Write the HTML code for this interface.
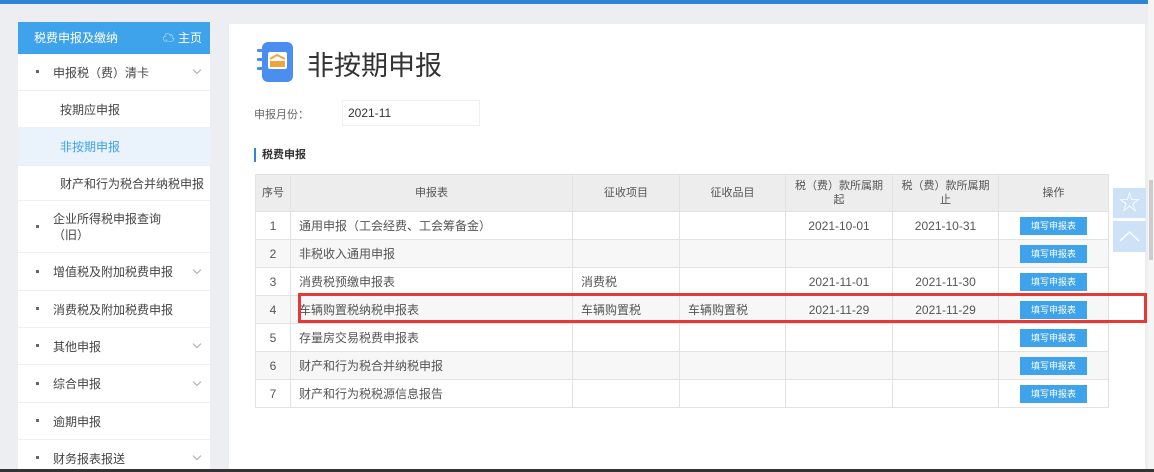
<!DOCTYPE html>
<html><head><meta charset="utf-8"><style>
*{margin:0;padding:0;box-sizing:border-box}
html,body{width:1154px;height:472px;overflow:hidden}
body{background:#eceef2;font-family:"Liberation Sans","Noto Sans CJK SC",sans-serif;position:relative;color:#555}
.topbar{position:absolute;left:0;top:0;width:1154px;height:4px;background:#2f86d6}
.side{position:absolute;left:18px;top:22px;width:192px;height:450px;background:#fff}
.sh{height:32px;background:#3ea3ea;color:#fff;font-size:12px;line-height:32px;padding-left:16px;position:relative}
.sh span{position:absolute;right:8px}
.it{border-bottom:1px solid #eee;font-size:12px;color:#444;position:relative;padding-left:35px;display:flex;align-items:center}
.it:before{content:"";position:absolute;left:18px;top:50%;width:3px;height:3px;background:#666;margin-top:-2px}
.it.sub{padding-left:42px}.it.sub:before{display:none}
.it.sel{background:#eaf2fb;color:#3ea3ea}
.chev{position:absolute;right:10px;top:50%;width:6px;height:6px;border-right:1px solid #aaa;border-bottom:1px solid #aaa;transform:rotate(45deg);margin-top:-5px}
.main{position:absolute;left:229px;top:24px;width:916px;height:448px;background:#fff}
.title{position:absolute;left:307px;top:44px;font-size:27px;color:#333}
.icon{position:absolute;left:257px;top:41px;width:37px;height:42px}
.lab{position:absolute;left:254px;top:106px;font-size:11px;color:#666}
.inp{position:absolute;left:342px;top:100px;width:138px;height:26px;border:1px solid #f0f0f0;font-size:12px;line-height:24px;padding-left:5px;color:#333}
.sec{position:absolute;left:254px;top:148px;font-size:11px;color:#333;border-left:2px solid #2f86d6;padding-left:6px;height:14px;line-height:14px;font-weight:bold}
table{position:absolute;left:255px;top:174px;border-collapse:collapse;font-size:12px;color:#555}
td,th{border:1px solid #e2e2e2;height:28px;text-align:center;font-weight:normal}
th{background:#ededed;height:37px;font-size:11px;line-height:14px}
td.l{text-align:left;padding-left:8px}
tr:nth-child(odd) td{background:#f7f7f7}
.b{display:inline-block;width:67px;height:18px;background:#3ea3ea;color:#fff;font-size:9px;line-height:18px}
.red{position:absolute;left:298px;top:293px;width:849px;height:30px;border:3px solid #e53935}
.fl{position:absolute;left:1113px;width:33px;height:30px;background:#cde2f7;color:#fff;text-align:center}
.scroll{position:absolute;left:1148px;top:0;width:6px;height:472px;background:#f5f5f5}
.bottom{position:absolute;left:0;top:469px;width:1154px;height:3px;background:#333}
</style></head><body>
<div class="topbar"></div>
<div class="scroll"><div style="position:absolute;top:180px;left:1px;width:4px;height:80px;background:#ccc"></div></div>
<div class="side">
<div class="sh">税费申报及缴纳<span>☁ 主页</span></div>
<div class="it" style="height:37px">申报税（费）清卡<i class="chev"></i></div>
<div class="it sub" style="height:37px">按期应申报</div>
<div class="it sub sel" style="height:38px">非按期申报</div>
<div class="it sub" style="height:35px">财产和行为税合并纳税申报</div>
<div class="it" style="height:52px;line-height:16px">企业所得税申报查询<br>（旧）</div>
<div class="it" style="height:38px">增值税及附加税费申报<i class="chev"></i></div>
<div class="it" style="height:37px">消费税及附加税费申报</div>
<div class="it" style="height:37px">其他申报<i class="chev"></i></div>
<div class="it" style="height:38px">综合申报<i class="chev"></i></div>
<div class="it" style="height:37px">逾期申报</div>
<div class="it" style="height:37px">财务报表报送<i class="chev"></i></div>
</div>
<div class="main"></div>
<svg class="icon" viewBox="0 0 37 42"><rect x="5" y="1" width="31" height="40" rx="6" fill="#4a8ff0"/><rect x="0" y="8" width="7" height="3" rx="1" fill="#4a8ff0"/><rect x="0" y="17" width="7" height="3" rx="1" fill="#4a8ff0"/><rect x="0" y="26" width="7" height="3" rx="1" fill="#4a8ff0"/><rect x="11" y="11" width="19" height="17" rx="2" fill="#fff"/><rect x="13" y="20" width="15" height="6" fill="#f0a53a"/><path d="M13 18 L20 14 L28 18" stroke="#f0a53a" stroke-width="2" fill="none"/></svg>
<div class="title">非按期申报</div>
<div class="lab">申报月份：</div>
<div class="inp">2021-11</div>
<div class="sec">税费申报</div>
<table>
<tr><th style="width:35px">序号</th><th style="width:282px">申报表</th><th style="width:107px">征收项目</th><th style="width:106px">征收品目</th><th style="width:107px">税（费）款所属期<br>起</th><th style="width:106px">税（费）款所属期<br>止</th><th style="width:110px">操作</th></tr>
<tr><td>1</td><td class="l">通用申报（工会经费、工会筹备金）</td><td></td><td></td><td>2021-10-01</td><td>2021-10-31</td><td><span class="b">填写申报表</span></td></tr>
<tr><td>2</td><td class="l">非税收入通用申报</td><td></td><td></td><td></td><td></td><td><span class="b">填写申报表</span></td></tr>
<tr><td>3</td><td class="l">消费税预缴申报表</td><td class="l">消费税</td><td></td><td>2021-11-01</td><td>2021-11-30</td><td><span class="b">填写申报表</span></td></tr>
<tr><td>4</td><td class="l">车辆购置税纳税申报表</td><td class="l">车辆购置税</td><td class="l">车辆购置税</td><td>2021-11-29</td><td>2021-11-29</td><td><span class="b">填写申报表</span></td></tr>
<tr><td>5</td><td class="l">存量房交易税费申报表</td><td></td><td></td><td></td><td></td><td><span class="b">填写申报表</span></td></tr>
<tr><td>6</td><td class="l">财产和行为税合并纳税申报</td><td></td><td></td><td></td><td></td><td><span class="b">填写申报表</span></td></tr>
<tr><td>7</td><td class="l">财产和行为税税源信息报告</td><td></td><td></td><td></td><td></td><td><span class="b">填写申报表</span></td></tr>
</table>
<div class="red"></div>
<div class="fl" style="top:188px;font-size:22px;line-height:30px">☆</div>
<div class="fl" style="top:221px;height:31px"><svg width="33" height="31"><path d="M7 20 L16.5 11 L26 20" stroke="#fff" stroke-width="1.5" fill="none"/></svg></div>
<div class="bottom"></div>
</body></html>
